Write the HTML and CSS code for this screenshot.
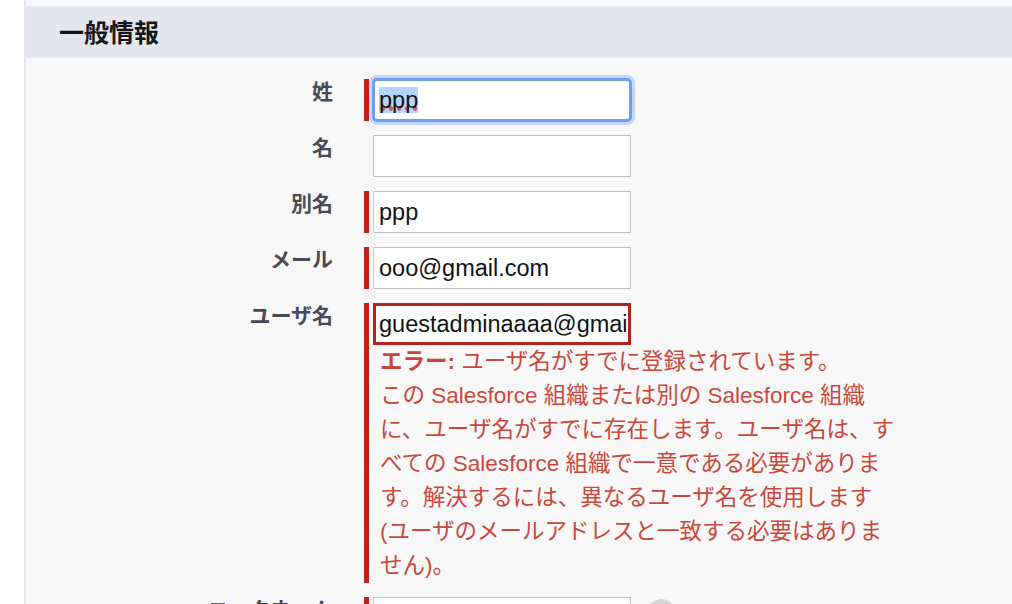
FILE: index.html
```html
<!DOCTYPE html>
<html lang="ja">
<head>
    <meta charset="UTF-8">
    <title>ユーザの編集</title>
    <link rel="stylesheet" href="styles.css">
</head>
<body>

<div class="page">
    <h3 class="section-title">一般情報</h3>

    <div class="fields">
        <div class="row">
            <label class="label">姓</label>
            <div class="value required">
                <div class="input focused"><span class="selected">ppp</span></div>
            </div>
        </div>

        <div class="row">
            <label class="label">名</label>
            <div class="value">
                <div class="input"></div>
            </div>
        </div>

        <div class="row">
            <label class="label">別名</label>
            <div class="value required">
                <div class="input">ppp</div>
            </div>
        </div>

        <div class="row">
            <label class="label">メール</label>
            <div class="value required">
                <div class="input">ooo@gmail.com</div>
            </div>
        </div>

        <div class="row">
            <label class="label">ユーザ名</label>
            <div class="value required">
                <div class="input invalid">guestadminaaaa@gmail.com</div>
                <div class="error-msg">
                    <div><strong>エラー:</strong> ユーザ名がすでに登録されています。</div>
                    <div>この Salesforce 組織または別の Salesforce 組織に、ユーザ名がすでに存在します。ユーザ名は、すべての Salesforce 組織で一意である必要があります。解決するには、異なるユーザ名を使用します (ユーザのメールアドレスと一致する必要はありません)。</div>
                </div>
            </div>
        </div>

        <div class="row">
            <label class="label">ニックネーム</label>
            <div class="value required inline">
                <div class="input"></div>
                <span class="help"></span>
            </div>
        </div>
    </div>
</div>

</body>
</html>
```

FILE: styles.css
```css
/* General */
body {
    margin: 0;
    background-color: #fff;
    font-family: "Noto Sans CJK JP", sans-serif;
}
.page {
    margin-left: 24px;
    border-left: 2px solid #e6e7ea;
    background-color: #f8f8f8;
    padding-top: 6px;
    min-height: 100vh;
}

/* Section header */
.section-title {
    margin: 0;
    height: 52px;
    line-height: 50px;
    padding-left: 33px;
    background-color: #e3e6ef;
    color: #16161a;
    font-size: 25px;
    font-weight: bold;
}

/* Form rows */
.fields {
    padding-top: 21px;
}
.row {
    display: flex;
    align-items: flex-start;
    margin-bottom: 14px;
}
.label {
    flex: 0 0 338px;
    box-sizing: border-box;
    padding-right: 31px;
    text-align: right;
    font-size: 21px;
    font-weight: bold;
    line-height: 22px;
    color: #4a4a56;
}
.value {
    border-left: 5px solid transparent;
    padding-left: 4px;
}
.value.required {
    border-left-color: #c0221b; /* required marker */
}
.value.inline {
    display: flex;
    align-items: flex-start;
}

/* Text boxes */
.input {
    width: 258px;
    height: 42px;
    box-sizing: border-box;
    border: 1px solid #c4c4c4;
    background-color: #fff;
    padding: 0 5px;
    font-family: "Liberation Sans", Arial, sans-serif;
    font-size: 23.5px;
    line-height: 40px;
    color: #111;
    white-space: nowrap;
    overflow: hidden;
}
.input.focused {
    border: 2px solid #6d9cf1;
    border-radius: 4px;
    padding-left: 4px;
    line-height: 38px;
    box-shadow: 0 0 0 1px #6d9cf1, 0 0 0 4px #c4d7f9;
}
.input.invalid {
    border: 3px solid #b1231d;
    padding-left: 3px;
    line-height: 36px;
}
.selected {
    background:
        radial-gradient(circle, #de5a52 2px, transparent 2.5px) left 0 bottom 2px / 8px 5px repeat-x,
        #b4d5fe;
}

/* Error message under the field */
.error-msg {
    width: 520px;
    margin-left: 7px;
    font-family: "Liberation Sans", "Noto Sans CJK JP", sans-serif;
    font-size: 22.5px;
    line-height: 34px;
    color: #c9483b;
}
.error-msg strong {
    font-weight: bold;
}

.help {
    width: 27px;
    height: 27px;
    margin-left: 17px;
    margin-top: 2px;
    border-radius: 50%;
    background-color: #d4d4d4;
}
```
